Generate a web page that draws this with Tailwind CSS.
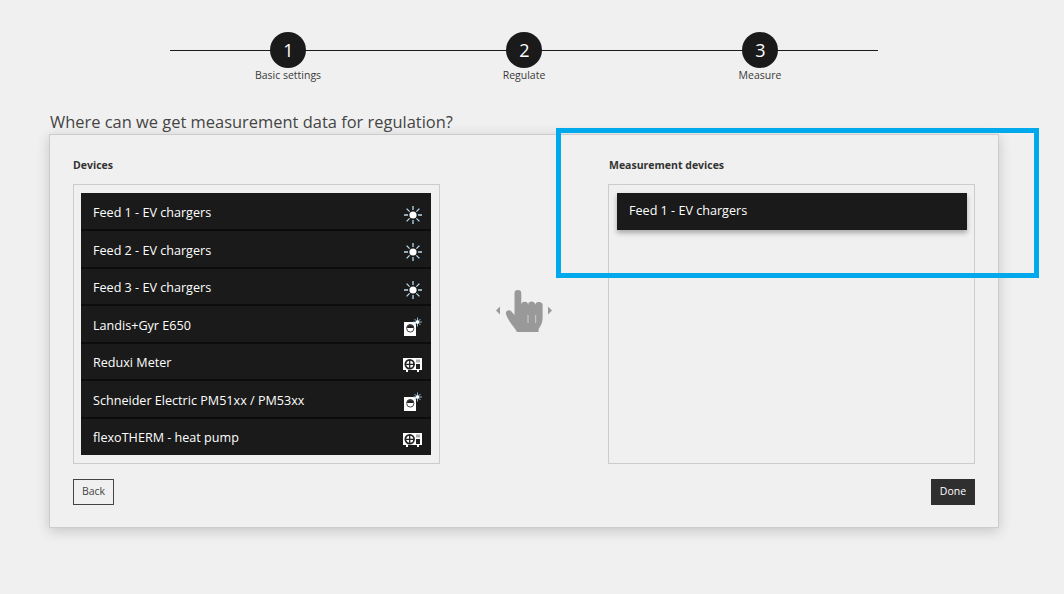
<!DOCTYPE html>
<html lang="en">

<head>
    <meta charset="utf-8">
    <title>Measurement devices</title>
    <script src="https://cdn.jsdelivr.net/npm/@tailwindcss/browser@4"></script>
</head>

<body class="relative h-[594px] w-[1064px] overflow-hidden bg-[#f0f0f0] font-['Open_Sans',sans-serif] text-[#333]">
    <!-- stepper -->
    <div class="relative ml-[170px] flex w-[708px] pt-[32px]">
        <div class="absolute left-0 right-0 top-[50px] h-px bg-[#1a1a1a]"></div>
        <div class="relative flex w-[236px] flex-col items-center">
            <div class="flex h-9 w-9 items-center justify-center rounded-full bg-[#1a1a1a] pl-px text-[18px] font-medium text-white">1</div>
            <div class="mt-[-1px] text-[10.5px] leading-[16px] text-[#3a3a3a]">Basic settings</div>
        </div>
        <div class="relative flex w-[236px] flex-col items-center">
            <div class="flex h-9 w-9 items-center justify-center rounded-full bg-[#1a1a1a] pl-px text-[18px] font-medium text-white">2</div>
            <div class="mt-[-1px] text-[10.5px] leading-[16px] text-[#3a3a3a]">Regulate</div>
        </div>
        <div class="relative flex w-[236px] flex-col items-center">
            <div class="flex h-9 w-9 items-center justify-center rounded-full bg-[#1a1a1a] pl-px text-[18px] font-medium text-white">3</div>
            <div class="mt-[-1px] text-[10.5px] leading-[16px] text-[#3a3a3a]">Measure</div>
        </div>
    </div>

    <h2 class="ml-[50px] mt-[27px] text-[16.45px] leading-[24px] text-[#444]">Where can we get measurement data for regulation?</h2>

    <!-- card -->
    <div class="ml-[49px] flex h-[394px] w-[950px] flex-col border border-[#ccc] bg-[#f0f0f0] px-[23px] pt-[22px] shadow-[0_3px_12px_rgba(0,0,0,0.18)]">
        <div class="flex justify-between">
            <div class="w-[367px]">
                <div class="h-[27px] text-[10.5px] font-bold leading-[16px] text-[#333]">Devices</div>
                <div class="h-[280px] border border-[#ccc] px-[7px] pt-[8px]">
                    <ul class="w-[350px] bg-[#1a1a1a] text-[12.6px] text-white">
                        <li class="flex h-[38px] items-center justify-between border-b-2 border-[#0c0c0c] pl-3 pr-2 pt-[4px]">Feed 1 - EV chargers
                            <svg class="mt-[4px] h-5 w-5" viewBox="0 0 20 20"><g stroke="#b8dcf0" stroke-width="1.3"><path d="M10 1v4M10 15v4M1 10h4M15 10h4M3.6 3.6l3 3M13.4 13.4l3 3M16.4 3.6l-3 3M6.6 13.4l-3 3"/></g><circle cx="10" cy="10" r="3.6" fill="#fff"/></svg>
                        </li>
                        <li class="flex h-[38px] items-center justify-between border-b-2 border-[#0c0c0c] pl-3 pr-2 pt-[4px]">Feed 2 - EV chargers
                            <svg class="mt-[2px] h-5 w-5" viewBox="0 0 20 20"><g stroke="#b8dcf0" stroke-width="1.3"><path d="M10 1v4M10 15v4M1 10h4M15 10h4M3.6 3.6l3 3M13.4 13.4l3 3M16.4 3.6l-3 3M6.6 13.4l-3 3"/></g><circle cx="10" cy="10" r="3.6" fill="#fff"/></svg>
                        </li>
                        <li class="flex h-[37px] items-center justify-between border-b-2 border-[#0c0c0c] pl-3 pr-2 pt-[4px]">Feed 3 - EV chargers
                            <svg class="mt-[3px] h-5 w-5" viewBox="0 0 20 20"><g stroke="#b8dcf0" stroke-width="1.3"><path d="M10 1v4M10 15v4M1 10h4M15 10h4M3.6 3.6l3 3M13.4 13.4l3 3M16.4 3.6l-3 3M6.6 13.4l-3 3"/></g><circle cx="10" cy="10" r="3.6" fill="#fff"/></svg>
                        </li>
                        <li class="flex h-[38px] items-center justify-between border-b-2 border-[#0c0c0c] pl-3 pr-2 pt-[4px]">Landis+Gyr E650
                            <svg class="mt-[2px] h-5 w-5" viewBox="0 0 20 20"><path d="M1 5h12v14H1z" fill="#fff"/><path d="M3.500 11a3.800 3.800 0 0 1 7.600 0z" fill="#222"/><circle cx="7.300" cy="11.500" r="3.600" fill="none" stroke="#444" stroke-width="1"/><path d="M14.500 .5v9M10 5h9M11.500 2l6 6M17.500 2l-6 6" stroke="#9cc4dc" stroke-width=".9"/><circle cx="14.500" cy="5" r="1.800" fill="#fff"/></svg>
                        </li>
                        <li class="flex h-[37px] items-center justify-between border-b-2 border-[#0c0c0c] pl-3 pr-[9px] pt-[4px]">Reduxi Meter
                            <svg class="mt-[3px] h-[14px] w-[19px]" viewBox="0 0 19 14"><path d="M0 0h19v12h-3v2h-2v-2H5v2H3v-2H0z" fill="#fff"/><circle cx="6.700" cy="6.300" r="4.400" fill="none" stroke="#222" stroke-width="1.700"/><path d="M6.700 2v8.600M2.300 6.300h8.800" stroke="#222" stroke-width="1.300"/><path d="M13 1.500h4v3h-4z" fill="#aaa"/><path d="M13 6h4v5h-4z" fill="#222"/></svg>
                        </li>
                        <li class="flex h-[38px] items-center justify-between border-b-2 border-[#0c0c0c] pl-3 pr-2 pt-[4px]">Schneider Electric PM51xx / PM53xx
                            <svg class="mt-[2px] h-5 w-5" viewBox="0 0 20 20"><path d="M1 5h12v14H1z" fill="#fff"/><path d="M3.500 11a3.800 3.800 0 0 1 7.600 0z" fill="#222"/><circle cx="7.300" cy="11.500" r="3.600" fill="none" stroke="#444" stroke-width="1"/><path d="M14.500 .5v9M10 5h9M11.500 2l6 6M17.500 2l-6 6" stroke="#9cc4dc" stroke-width=".9"/><circle cx="14.500" cy="5" r="1.800" fill="#fff"/></svg>
                        </li>
                        <li class="flex h-[36px] items-center justify-between pl-3 pr-[9px] pt-[2px]">flexoTHERM - heat pump
                            <svg class="mt-[4px] h-[14px] w-[19px]" viewBox="0 0 19 14"><path d="M0 0h19v12h-3v2h-2v-2H5v2H3v-2H0z" fill="#fff"/><circle cx="6.700" cy="6.300" r="4.400" fill="none" stroke="#222" stroke-width="1.700"/><path d="M6.700 2v8.600M2.300 6.300h8.800" stroke="#222" stroke-width="1.300"/><path d="M13 1.500h4v3h-4z" fill="#aaa"/><path d="M13 6h4v5h-4z" fill="#222"/></svg>
                        </li>
                    </ul>
                </div>
            </div>

            <!-- drag hint -->
            <div class="self-start pt-[133px]">
                <svg class="h-[44px] w-[58px]" viewBox="0 0 58 44" fill="#999">
                    <path d="M1 20.500l4-4v8zM57 20.500l-4-4v8z"/>
                    <path d="M19.500 3.500a3.400 3.400 0 0 1 6.800 0V15.500a3.400 3.400 0 0 1 6.800-.5a3.500 3.500 0 0 1 7 0a3.750 3.750 0 0 1 7.500 1.500V28c0 5-2 8-4 11v3H22c-3-6-8-9-11-18c-1-3 3-5 5-3l3.500 4z"/>
                    <path d="M33 25v8M40.700 25v8" stroke="#cfcfcf" stroke-width="1"/>
                </svg>
            </div>

            <div class="w-[367px]">
                <div class="h-[27px] pl-px text-[10.5px] font-bold leading-[16px] text-[#333]">Measurement devices</div>
                <div class="h-[280px] border border-[#ccc] px-[8px] pt-[8px]">
                    <div class="flex h-[37px] w-[350px] items-center bg-[#1a1a1a] pl-3 text-[12.6px] text-white shadow-[0_3px_5px_rgba(0,0,0,0.3)]">Feed 1 - EV chargers</div>
                </div>
            </div>
        </div>

        <div class="mt-[15px] flex justify-between">
            <button class="h-[26px] w-[41px] border border-[#444] text-[10.5px] text-[#444]">Back</button>
            <button class="h-[26px] w-[44px] bg-[#2f2f2f] text-[10.5px] text-white">Done</button>
        </div>
    </div>

    <!-- highlight overlay -->
    <div class="absolute left-[556px] top-[128px] h-[150px] w-[483px] border-[5px] border-[#00a8ec]"></div>
</body>

</html>
